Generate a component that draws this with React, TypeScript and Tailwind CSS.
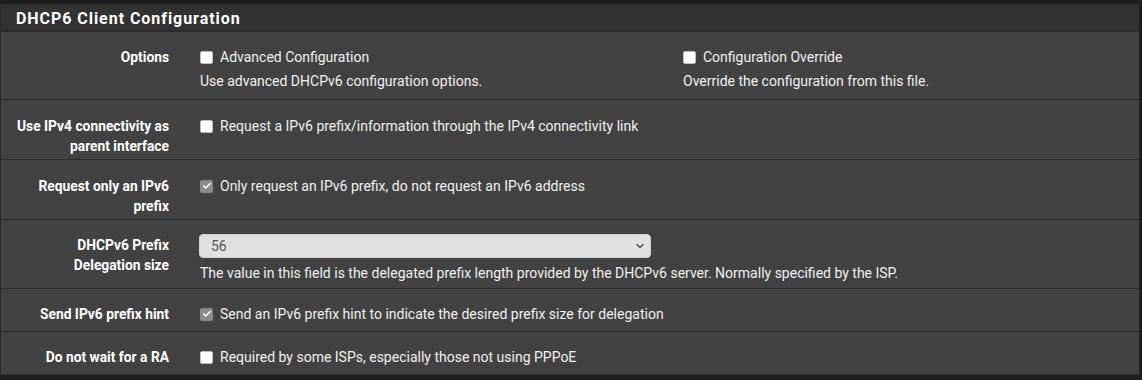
import { Check, ChevronDown } from "lucide-react";

const Box = ({ checked }: { checked?: boolean }) =>
  checked ? (
    <span className="mr-[7px] flex h-[13px] w-[13px] shrink-0 items-center justify-center rounded-[2px] bg-[#8a8a8a]">
      <Check className="h-[10px] w-[10px] text-white" strokeWidth={3.5} />
    </span>
  ) : (
    <span className="mr-[7px] h-[13px] w-[13px] shrink-0 rounded-[2px] border border-[#bdbdbd] bg-white" />
  );

const CheckLine = ({ checked, text }: { checked?: boolean; text: string }) => (
  <div className="flex h-5 items-center">
    <Box checked={checked} />
    <span>{text}</span>
  </div>
);

const Row = ({
  label,
  pad,
  children,
}: {
  label: React.ReactNode;
  pad: string;
  children: React.ReactNode;
}) => (
  <div className={`flex border-b border-[#2b2b2b] ${pad}`}>
    <div className="w-[184px] shrink-0 pr-[16px] text-right text-[13.8px] font-bold leading-5 text-white">
      {label}
    </div>
    <div className="flex-1 pl-[15px] text-[14px] leading-5 text-[#f0f0f0]">{children}</div>
  </div>
);

export default function App() {
  return (
    <div className="h-[380px] w-[1142px] bg-[#1f1f1f] pt-[4px] pr-[3px]" style={{ fontFamily: "Roboto, 'Liberation Sans', sans-serif" }}>
      <div className="border-l border-[#2a2a2a] bg-[#424242]">
        <div className="flex h-[28px] items-center border-b-2 border-[#2b2b2b] bg-[#323232] pl-[15px] pt-[3px] text-[16px] font-bold tracking-[0.95px] text-white">
          DHCP6 Client Configuration
        </div>

        <Row label="Options" pad="pt-[15px] pb-[8px]">
          <div className="flex">
            <div className="w-[483px]">
              <CheckLine text="Advanced Configuration" />
              <div className="mt-[4px]">Use advanced DHCPv6 configuration options.</div>
            </div>
            <div>
              <CheckLine text="Configuration Override" />
              <div className="mt-[4px]">Override the configuration from this file.</div>
            </div>
          </div>
        </Row>

        <Row
          label={
            <>
              Use IPv4 connectivity as
              <br />
              parent interface
            </>
          }
          pad="pt-[16px] pb-[3px]"
        >
          <CheckLine text="Request a IPv6 prefix/information through the IPv4 connectivity link" />
        </Row>

        <Row
          label={
            <>
              Request only an IPv6
              <br />
              prefix
            </>
          }
          pad="pt-[16px] pb-[3px]"
        >
          <CheckLine checked text="Only request an IPv6 prefix, do not request an IPv6 address" />
        </Row>

        <Row
          label={
            <>
              DHCPv6 Prefix
              <br />
              Delegation size
            </>
          }
          pad="pt-[15px] pb-[5px]"
        >
          <div className="-ml-[1px] -mt-[1px] flex h-[24px] w-[452px] items-center justify-between rounded-[4px] border border-[#cfcfcf] bg-[#e0e0e0] pl-[11px] pr-[4px] text-[#555]">
            <span>56</span>
            <ChevronDown className="h-[12px] w-[12px] text-[#555]" strokeWidth={3} />
          </div>
          <div className="mt-[5px]">
            The value in this field is the delegated prefix length provided by the DHCPv6 server. Normally specified by the ISP.
          </div>
        </Row>

        <Row label="Send IPv6 prefix hint" pad="pt-[15px] pb-[7px]">
          <CheckLine checked text="Send an IPv6 prefix hint to indicate the desired prefix size for delegation" />
        </Row>

        <Row label="Do not wait for a RA" pad="pt-[15px] pb-[7px]">
          <CheckLine text="Required by some ISPs, especially those not using PPPoE" />
        </Row>
      </div>
    </div>
  );
}
